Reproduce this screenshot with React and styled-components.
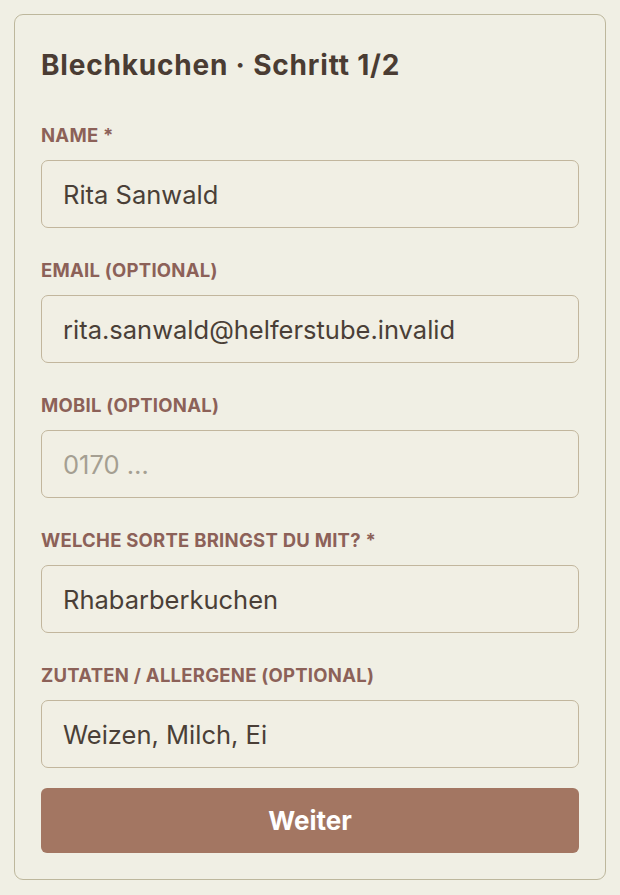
import React from "react";
import styled, { createGlobalStyle } from "styled-components";

const GlobalStyle = createGlobalStyle`
  * { box-sizing: border-box; }
  body {
    margin: 0;
    background: #f0efe4;
    font-family: Inter, "Noto Sans", sans-serif;
  }
`;

const Page = styled.div`
  padding: 14px;
`;

const Card = styled.form`
  border: 1px solid #bdb79c;
  border-radius: 9px;
  padding: 26px;
  display: flex;
  flex-direction: column;
`;

const Title = styled.h1`
  margin: 0 0 35px;
  font-size: 28px;
  line-height: 48px;
  font-weight: 700;
  letter-spacing: 0.8px;
  color: #4a3c33;
`;

const Field = styled.div`
  display: flex;
  flex-direction: column;
  gap: 14px;
  margin-bottom: 31px;

  &:last-of-type {
    margin-bottom: 20px;
  }
`;

const Label = styled.label`
  font-size: 18.5px;
  line-height: 22px;
  font-weight: 700;
  letter-spacing: 0.25px;
  text-transform: uppercase;
  color: #8c6158;
`;

const Input = styled.input`
  height: 68px;
  border: 1.5px solid #c2b69d;
  border-radius: 7px;
  background: #f1efe4;
  padding: 0 21px;
  font-family: inherit;
  font-size: 25.5px;
  color: #4a3f37;
  outline: none;

  &::placeholder {
    color: #a59f92;
  }
`;

const Button = styled.button`
  height: 65px;
  border: none;
  border-radius: 6px;
  background: #a37662;
  color: #fff;
  font-family: inherit;
  font-size: 26px;
  font-weight: 700;
`;

const fields = [
  { label: "Name *", value: "Rita Sanwald" },
  { label: "Email (optional)", value: "rita.sanwald@helferstube.invalid" },
  { label: "Mobil (optional)", placeholder: "0170 …" },
  { label: "Welche Sorte bringst du mit? *", value: "Rhabarberkuchen" },
  { label: "Zutaten / Allergene (optional)", value: "Weizen, Milch, Ei" },
];

export default function App() {
  return (
    <Page>
      <GlobalStyle />
      <Card onSubmit={(e) => e.preventDefault()}>
        <Title>Blechkuchen · Schritt 1/2</Title>
        {fields.map((f, i) => (
          <Field key={i}>
            <Label htmlFor={"f" + i}>{f.label}</Label>
            <Input
              id={"f" + i}
              defaultValue={f.value}
              placeholder={f.placeholder}
            />
          </Field>
        ))}
        <Button type="submit">Weiter</Button>
      </Card>
    </Page>
  );
}
